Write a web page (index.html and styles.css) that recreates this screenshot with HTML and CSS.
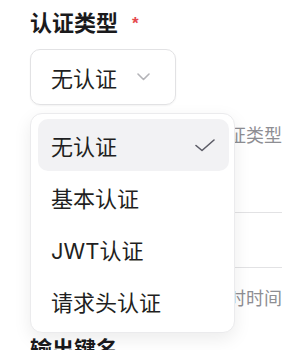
FILE: index.html
```html
<!DOCTYPE html>
<html lang="zh-CN">
<head>
  <meta charset="UTF-8">
  <meta name="viewport" content="width=device-width, initial-scale=1.0">
  <title>认证设置</title>
  <link rel="stylesheet" href="styles.css">
</head>
<body>
  <div class="form">

    <div class="field">
      <div class="field-label">认证类型<span class="required">*</span></div>
      <div class="select-wrap">
        <div class="select-trigger">
          <span>无认证</span>
          <svg class="chevron" width="13" height="8" viewBox="0 0 13 8"><polyline points="1,1 6.5,6.5 12,1" /></svg>
        </div>
        <div class="dropdown">
          <div class="option selected">
            <span>无认证</span>
            <svg class="check" width="20" height="13" viewBox="0 0 20 13"><polyline points="1,6.5 7,11.5 19,1" /></svg>
          </div>
          <div class="option">基本认证</div>
          <div class="option">JWT认证</div>
          <div class="option">请求头认证</div>
        </div>
      </div>
      <div class="field-help">选择接口所需要使用的认证类型</div>
    </div>

    <div class="field">
      <div class="field-label">超时时间</div>
      <div class="text-input"></div>
      <div class="field-help">调用接口请求时允许的超时时间（秒）</div>
    </div>

    <div class="field">
      <div class="field-label">输出键名</div>
      <div class="text-input"></div>
    </div>

  </div>
</body>
</html>
```

FILE: styles.css
```css
    body {
      margin: 0;
      background-color: #fff;
      font-family: "Inter", "Noto Sans CJK SC", sans-serif;
      color: #1f1f22;
      overflow: hidden;
    }
    .form {
      padding: 8px 0 0 30px;
    }
    .field {
      margin-bottom: 22px;
    }
    .field-label {
      display: flex;
      align-items: flex-start;
      font-size: 22px;
      font-weight: 700;
      line-height: 30px;
      color: #1a1a1c;
    }
    .required {
      margin: 7px 0 0 14px;
      font-family: "Liberation Sans", sans-serif;
      font-size: 17px;
      font-weight: 700;
      line-height: 17px;
      color: #e5484d;
    }
    .select-wrap {
      position: relative;
      display: flex;
      margin: 11px 0 18px;
    }
    .select-trigger {
      display: flex;
      align-items: center;
      gap: 20px;
      height: 56px;
      box-sizing: border-box;
      padding: 0 25px 0 20px;
      border: 1px solid #e2e2e4;
      border-radius: 10px;
      box-shadow: 0 1px 2px rgba(0, 0, 0, 0.05);
      font-size: 22px;
    }
    .chevron polyline {
      fill: none;
      stroke: #b4b4b8;
      stroke-width: 1.6;
      stroke-linecap: round;
      stroke-linejoin: round;
    }
    .dropdown {
      position: absolute;
      top: 64px;
      left: 0;
      z-index: 10;
      width: 205px;
      box-sizing: border-box;
      padding: 5px 5px 5px 7px;
      background: #fff;
      border: 1px solid #ebebed;
      border-radius: 12px;
      box-shadow: 0 6px 18px rgba(0, 0, 0, 0.08);
    }
    .option {
      display: flex;
      align-items: center;
      justify-content: space-between;
      height: 52px;
      padding: 0 14px 0 13px;
      border-radius: 10px;
      font-size: 22px;
      color: #1f1f22;
    }
    .option.selected {
      background-color: #f2f2f4;
    }
    .check polyline {
      fill: none;
      stroke: #5c5c66;
      stroke-width: 1.6;
      stroke-linecap: round;
      stroke-linejoin: round;
    }
    .text-input {
      width: 400px;
      height: 56px;
      box-sizing: border-box;
      margin: 11px 0 18px;
      border: 1px solid #e2e2e4;
      border-radius: 10px;
    }
    .field-help {
      font-size: 18px;
      line-height: 26px;
      color: #8e8e93;
      white-space: nowrap;
    }
```
